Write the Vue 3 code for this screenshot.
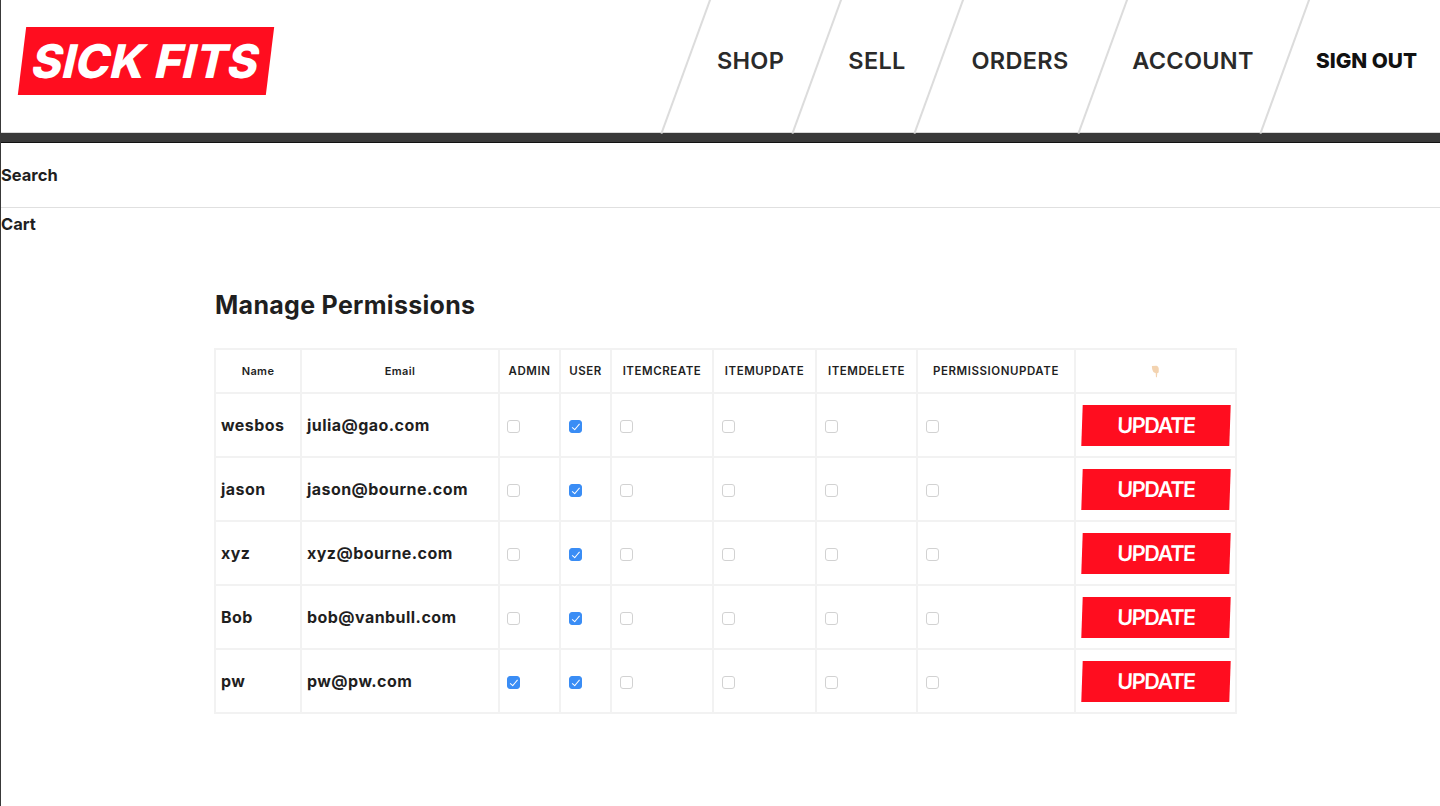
<script setup>
const navItems = [
  { label: 'SHOP', width: 131 },
  { label: 'SELL', width: 122 },
  { label: 'ORDERS', width: 164 },
  { label: 'ACCOUNT', width: 182 }
]
const perms = ['ADMIN', 'USER', 'ITEMCREATE', 'ITEMUPDATE', 'ITEMDELETE', 'PERMISSIONUPDATE']
const users = [
  { name: 'wesbos', email: 'julia@gao.com', has: ['USER'] },
  { name: 'jason', email: 'jason@bourne.com', has: ['USER'] },
  { name: 'xyz', email: 'xyz@bourne.com', has: ['USER'] },
  { name: 'Bob', email: 'bob@vanbull.com', has: ['USER'] },
  { name: 'pw', email: 'pw@pw.com', has: ['ADMIN', 'USER'] }
]
const colWidths = [86, 198, 61, 51, 102, 103, 101, 158, 161]
</script>

<template>
  <div class="page">
    <header class="header">
      <div class="bar">
        <a class="logo"><span>SICK FITS</span></a>
        <nav class="nav">
          <a v-for="item in navItems" :key="item.label" class="nav-item" :style="{ width: item.width + 'px' }">{{ item.label }}</a>
          <button class="nav-item signout" type="button">SIGN OUT</button>
        </nav>
      </div>
      <div class="rule"></div>
      <div class="sub-bar">Search</div>
      <div class="cart">Cart</div>
    </header>
    <main class="inner">
      <h2 class="title">Manage Permissions</h2>
      <table class="table">
        <colgroup>
          <col v-for="(w, i) in colWidths" :key="i" :style="{ width: w + 'px' }" />
        </colgroup>
        <thead>
          <tr>
            <th class="small">Name</th>
            <th class="small">Email</th>
            <th v-for="p in perms" :key="p">{{ p }}</th>
            <th>
              <svg class="hand" viewBox="0 0 10 14" width="9" height="13" role="img" aria-label="pointing down">
                <path d="M1 1 L6 .6 C7.4 .8 8.4 2 8.6 3.6 L8.6 7 C8.6 8 7.8 8.8 7 8.8 L6.6 13 C6.5 13.6 5.6 13.6 5.5 13 L5.2 8.8 C3.8 8.6 2.8 8 2.2 6.8 C1.4 5.2 1 3.4 1 1 Z" fill="#f3d3b0" />
              </svg>
            </th>
          </tr>
        </thead>
        <tbody>
          <tr v-for="u in users" :key="u.name">
            <td>{{ u.name }}</td>
            <td>{{ u.email }}</td>
            <td v-for="p in perms" :key="p" class="check-cell">
              <input type="checkbox" class="check" :checked="u.has.includes(p)" />
            </td>
            <td class="btn-cell"><button type="button" class="update">UPDATE</button></td>
          </tr>
        </tbody>
      </table>
    </main>
  </div>
</template>

<style>
html, body { margin: 0; background: #fff; }
</style>

<style scoped>
.page {
  box-sizing: border-box;
  min-height: 806px;
  border-left: 1px solid #393939;
  color: #1f1f1f;
  font-family: Inter, "Liberation Sans", sans-serif;
  overflow: hidden;
}
.bar {
  height: 132px;
  display: flex;
  justify-content: space-between;
  align-items: center;
}
.logo {
  margin-left: 21px;
  margin-top: -10px;
  width: 248px;
  height: 68px;
  background: #ff0d1f;
  transform: skew(-7deg);
  display: flex;
  align-items: center;
  justify-content: center;
  color: #fff;
  font-family: Inter, "Liberation Sans", sans-serif;
  font-weight: 800;
  font-size: 46.5px;
  letter-spacing: .1px;
}
.logo span {
  display: inline-block;
  transform: skew(-6deg);
}
.nav {
  display: flex;
  height: 100%;
  align-items: stretch;
}
.nav-item {
  position: relative;
  box-sizing: border-box;
  display: flex;
  align-items: center;
  justify-content: center;
  padding-bottom: 12px;
  font-weight: 600;
  font-size: 23.5px;
  letter-spacing: .3px;
  color: #2a2a2a;
}
.nav-item::before {
  content: "";
  position: absolute;
  left: -0.5px;
  top: -6px;
  bottom: -6px;
  width: 2px;
  background: #dcdcdc;
  transform: rotate(20deg);
}
.signout {
  width: 156px;
  border: 0;
  background: none;
  justify-content: flex-start;
  padding-left: 32px;
  font-family: inherit;
  font-size: 20.8px;
  letter-spacing: 0;
  font-weight: 800;
  color: #111;
}
.rule {
  box-sizing: border-box;
  height: 11px;
  background: #393939;
  border-top: 1px solid #d8d8d8;
  border-bottom: 1px solid #111;
}
.sub-bar {
  height: 65px;
  box-sizing: border-box;
  border-bottom: 1px solid #e0e0e0;
  display: flex;
  align-items: center;
  font-weight: 700;
  font-size: 16.5px;
}
.cart {
  font-weight: 700;
  font-size: 16.5px;
  padding-top: 7px;
  line-height: 19px;
}
.inner {
  width: 1023px;
  margin-left: 213px;
  padding-top: 56px;
}
.title {
  margin: 0 0 0 1px;
  font-size: 25px;
  line-height: 30px;
  font-weight: 700;
  letter-spacing: .3px;
}
.table {
  margin-top: 28px;
  width: 1022px;
  border-collapse: collapse;
  table-layout: fixed;
  border: 2px solid #f2f2f2;
}
th, td {
  border: 2px solid #f2f2f2;
  padding: 0 5px;
}
th {
  height: 42px;
  font-size: 11.5px;
  font-weight: 600;
  letter-spacing: .55px;
  white-space: nowrap;
}
th.small { font-size: 11px; letter-spacing: .4px; }
td {
  height: 62px;
  font-size: 16px;
  font-weight: 700;
  letter-spacing: .45px;
  white-space: nowrap;
}
.hand { display: block; margin: 0 auto; }
.check-cell { padding-left: 8px; }
td.check-cell:nth-child(3) { padding-left: 7px; }
.check {
  appearance: none;
  box-sizing: border-box;
  position: relative;
  display: block;
  width: 13px;
  height: 13px;
  margin: 3px 0 0;
  border: 1px solid #d2d2d2;
  border-radius: 3px;
  background: #fff;
}
.check:checked {
  background: #3a8df5;
  border-color: #3a8df5;
}
.check:checked::after {
  content: "";
  position: absolute;
  left: 3.5px;
  top: 1px;
  width: 3px;
  height: 6.5px;
  border: solid #fff;
  border-width: 0 1.8px 1.8px 0;
  transform: rotate(40deg);
}
.btn-cell { padding-left: 5px; padding-right: 5px; }
.update {
  display: block;
  width: 148px;
  height: 41px;
  margin: 0 auto;
  padding: 0 0 2px;
  border: 0;
  background: #ff0d1f;
  color: #fff;
  font-family: inherit;
  font-size: 21.5px;
  font-weight: 600;
  letter-spacing: -1.3px;
  transform: skew(-2deg);
}
</style>
